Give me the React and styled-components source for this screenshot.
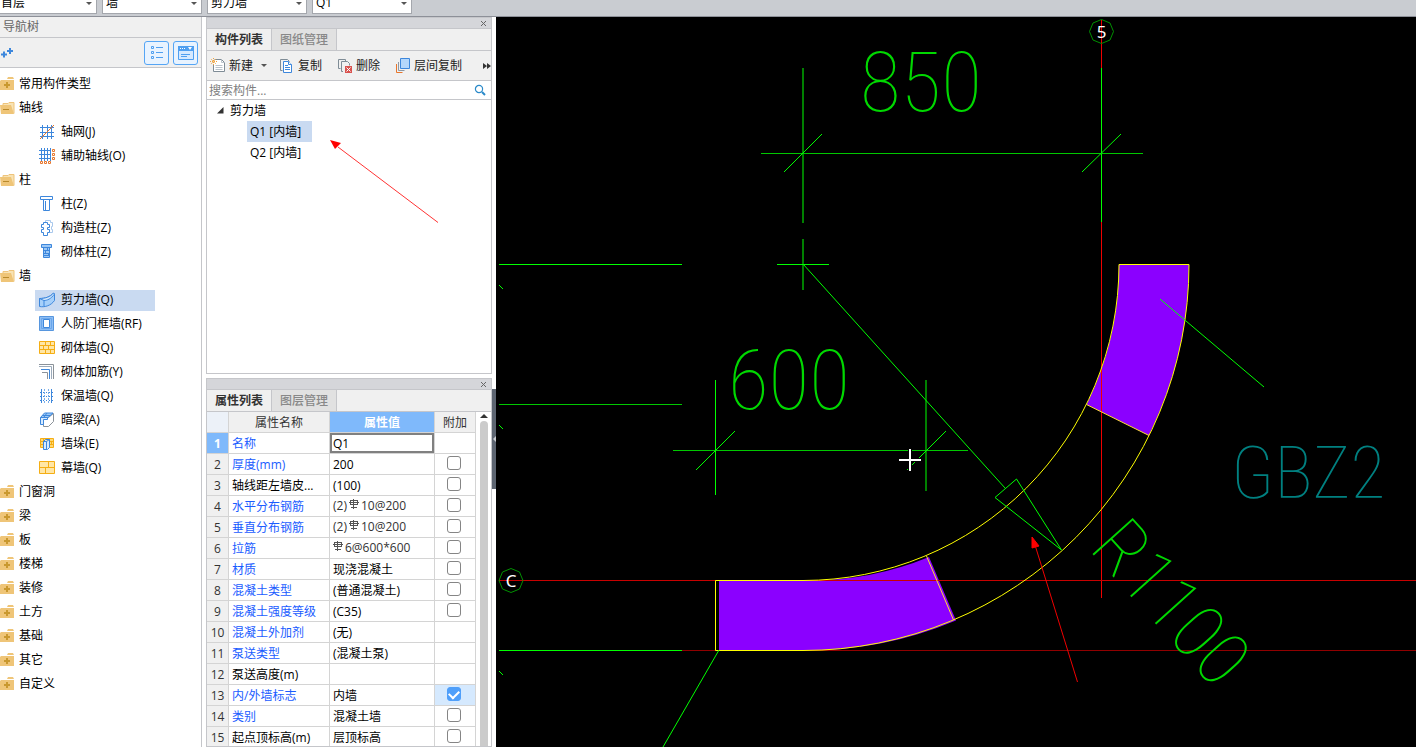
import React from "react";
import styled, { createGlobalStyle } from "styled-components";

const GlobalStyle = createGlobalStyle`
    * {
        box-sizing: border-box;
    }

    body {
        margin: 0;
        overflow: hidden;
        background: #fff;
        color: #000;
        font-family: "Open Sans", "Noto Sans CJK SC", sans-serif;
        font-size: 12px;
        line-height: 20px;
    }

    button, input, select {
        font: inherit;
        color: inherit;
    }

    button {
        padding: 0;
        border: 0;
        background: none;
    }

    svg {
        display: block;
        flex: none;
    }
`;

const BLUE = "#3d87dc";
const GOLD = "#f5ae14";

const combos = [
    { label: "楼层", value: "首层", first: true },
    { label: "构件类别", value: "墙" },
    { label: "构件类型", value: "剪力墙" },
    { label: "构件", value: "Q1" },
];

const navTree = [
    { name: "常用构件类型" },
    { name: "轴线", children: [["grid", "轴网(J)"], ["auxGrid", "辅助轴线(O)"]] },
    { name: "柱", children: [["column", "柱(Z)"], ["tieColumn", "构造柱(Z)"], ["brickColumn", "砌体柱(Z)"]] },
    {
        name: "墙",
        children: [
            ["shearWall", "剪力墙(Q)"],
            ["frameWall", "人防门框墙(RF)"],
            ["brickWall", "砌体墙(Q)"],
            ["rebar", "砌体加筋(Y)"],
            ["insulation", "保温墙(Q)"],
            ["beam", "暗梁(A)"],
            ["pier", "墙垛(E)"],
            ["curtain", "幕墙(Q)"],
        ],
    },
    { name: "门窗洞" },
    { name: "梁" },
    { name: "板" },
    { name: "楼梯" },
    { name: "装修" },
    { name: "土方" },
    { name: "基础" },
    { name: "其它" },
    { name: "自定义" },
];

const properties = [
    { name: "名称", value: "Q1", blue: true, editing: true },
    { name: "厚度(mm)", value: "200", blue: true, extra: true },
    { name: "轴线距左墙皮...", value: "(100)", extra: true },
    { name: "水平分布钢筋", before: "(2)", value: "10@200", steel: true, blue: true, extra: true },
    { name: "垂直分布钢筋", before: "(2)", value: "10@200", steel: true, blue: true, extra: true },
    { name: "拉筋", before: "", value: "6@600*600", steel: true, blue: true, extra: true },
    { name: "材质", value: "现浇混凝土", blue: true, extra: true },
    { name: "混凝土类型", value: "(普通混凝土)", blue: true, extra: true },
    { name: "混凝土强度等级", value: "(C35)", blue: true, extra: true },
    { name: "混凝土外加剂", value: "(无)", blue: true },
    { name: "泵送类型", value: "(混凝土泵)", blue: true },
    { name: "泵送高度(m)", value: "" },
    { name: "内/外墙标志", value: "内墙", blue: true, extra: true, checked: true },
    { name: "类别", value: "混凝土墙", blue: true, extra: true },
    { name: "起点顶标高(m)", value: "层顶标高", extra: true },
];

/* ---------- icons ---------- */

const icons = {
    grid: (
        <g fill="none">
            <path d="M3.500 1v14M8.500 1v14M12.500 1v14M1 3.500h14M1 8.500h14M1 12.500h14" stroke={BLUE} />
            <path d="M1 15L15 1" stroke="#e8762c" />
        </g>
    ),
    auxGrid: (
        <g fill="none">
            <path d="M2.500 0v13M5.500 0v13M8.500 0v13M11.500 0v13M0 2.500h12M0 6.500h12M0 10.500h12" stroke={BLUE} />
            <path d="M1.500 13.500h2v2h-2zM5.500 13.500h2v2h-2zM9.500 13.500h2v2h-2zM13.500 1.500h2v2h-2zM13.500 5.500h2v2h-2zM13.500 9.500h2v2h-2z" stroke="#e8762c" />
        </g>
    ),
    column: (
        <path d="M1.500.5h12v3h-12zM4.500 3.500v11h6v-11M6.500 5v9" fill="#fff" stroke={BLUE} />
    ),
    tieColumn: (
        <g fill="#fff">
            <path d="M6.500 3V.5h5v2h2v4h-1v3h1v3h-3" stroke="#a9c8ec" />
            <path d="M4.500 2.500h4v2h2v3h-2v2h2v3h-2v3h-4v-3h-2v-3h2v-2h-2v-3h2z" stroke={BLUE} />
        </g>
    ),
    brickColumn: (
        <g>
            <path d="M2.500.5h10v3h-10zM4.500 3.500h6v10h-6z" fill="#9cc8f6" stroke={BLUE} />
            <path d="M5 6.500h6M5 9.500h6M5 11.500h6M8.500 4v2M6.500 7v2M9.500 9v2" stroke={BLUE} />
        </g>
    ),
    shearWall: (
        <g stroke={BLUE} strokeLinejoin="round">
            <path d="M.5 6.500C6 6.500 11 5 14.500 1l1 1v6.500C12 13.500 6 15.500.5 14.500z" fill="#a6d0fa" />
            <path d="M.5 6.500C6 6.500 11.500 5 14.500 1l1 1C12 7 8 8.500 5 8.500z" fill="#d7ebff" />
            <path d="M5 8.500v6" fill="none" />
        </g>
    ),
    frameWall: (
        <g>
            <path d="M.5.5h14v14H.5z" fill="#8dbef5" stroke="#5796de" />
            <path d="M2.500 2.500h10v10h-10z" fill="none" stroke="#6ba6ea" />
            <path d="M4.500 3.500h6v8h-6z" fill="#fff" stroke={BLUE} />
        </g>
    ),
    brickWall: (
        <path d="M.5 1.500h15v12H.5zM.5 5.500h15M.5 9.500h15M6.500 1.500v4M11.500 1.500v4M4.500 5.500v4M9.500 5.500v4M6.500 9.500v4M11.500 9.500v4" fill="#ffe6a6" stroke={GOLD} />
    ),
    rebar: (
        <g fill="none">
            <path d="M0 .5h14.500V15M3 8.500h5.500V15" stroke="#8b9299" />
            <path d="M2 5.500h8.500V15" stroke={BLUE} />
            <path d="M0 2.500h12.500V15" stroke="#9cabbb" />
        </g>
    ),
    insulation: (
        <g fill="none" stroke={BLUE}>
            <path d="M2.500 1v14M12.500 1v14" />
            <path d="M5.500 1v14M9.500 1v14" stroke="#7aaeea" strokeDasharray="2 1" />
            <path d="M1 4.500h13M1 8.500h13M1 12.500h13" strokeDasharray="1 2" />
        </g>
    ),
    beam: (
        <g strokeLinejoin="round">
            <path d="M4.500 7.500l5-2 5-4v8l-5 5h-5z" fill="#fff" stroke="#8b9299" />
            <path d="M1.500 5.500l4-4.500h8.500l-5 4.500zM3.500 3.500h8M8 1L5 5" fill="#9cc8f6" stroke={BLUE} />
            <path d="M1.500 5.500h7v2h-4v5h-3z" fill="#d7ebff" stroke={BLUE} />
        </g>
    ),
    pier: (
        <g>
            <path d="M1.500 2.500h13v9h-13zM1.500 5.500h13M1.500 8.500h13M4.500 2.500v3M12.500 5.500v3" fill="#ffd873" stroke={GOLD} />
            <path d="M4.500 5.500l2-2h4v8l-2 2h-4zM7.500 5.500v8M4.500 5.500h3l3-2" fill="#d7ebff" stroke={BLUE} />
        </g>
    ),
    curtain: (
        <path d="M.5 1.500h15v12H.5zM.5 7.500h15M9.500 1.500v6M6.500 7.500v6" fill="#ffe6a6" stroke={GOLD} />
    ),
};

function ItemIcon({ name }) {
    return <svg width="16" height="16" viewBox="0 0 16 16" aria-hidden="true">{icons[name]}</svg>;
}

function FolderIcon({ open }) {
    if (open) {
        return (
            <svg width="15" height="14" viewBox="0 0 15 14" aria-hidden="true">
                <path d="M3 4V2.500h5l1-1h5v11" fill="#f8e3b4" stroke="#eec37a" />
                <path d="M0 4h11l3 9H1z" fill="#efc578" />
                <path d="M3 8.500h6" stroke="#b98a2c" />
            </svg>
        );
    }
    return (
        <svg width="15" height="14" viewBox="0 0 15 14" aria-hidden="true">
            <path d="M8 0h5l1 2H7z" fill="#efc578" />
            <path d="M0 4l1-1h13v10H0z" fill="#efc578" />
            <path d="M4 8h6M7 5v6" stroke="#c9982f" strokeWidth="2" />
        </svg>
    );
}

function RebarGlyph() {
    return (
        <svg width="10" height="10" viewBox="0 0 10 10" role="img" aria-label="HRB400">
            <path d="M1 1.500h8M0 3.500h10M1 5.500h8M2 8.500h6M4.500 0v10M1.500 1v5M8.500 1v5" fill="none" stroke="#555" />
        </svg>
    );
}

/* ---------- panels ---------- */

function NavPanel() {
    return (
        <Nav>
            <NavTitle>导航树</NavTitle>
            <NavTools>
                <AddButton aria-label="添加">
                    <svg width="13" height="12" viewBox="0 0 13 12">
                        <path d="M1 7.500h6M4 4.500v6M7 4h6M10 1v6" stroke={BLUE} strokeWidth="2" />
                    </svg>
                </AddButton>
                <ViewButton aria-label="列表视图">
                    <svg width="14" height="15" viewBox="0 0 14 15" fill="none" stroke="#4f9ff0">
                        <path d="M1.500 1.500h2v2h-2zM1.500 6.500h2v2h-2zM1.500 11.500h2v2h-2zM6 2.500h7M6 7.500h7M6 12.500h7" />
                    </svg>
                </ViewButton>
                <ViewButton aria-label="窗口视图">
                    <svg width="16" height="14" viewBox="0 0 16 14">
                        <path d="M.5.5h15v13H.5z" fill="#d5e9ff" stroke="#4f9ff0" />
                        <path d="M0 0h16v5H0z" fill="#4f9ff0" />
                        <path d="M2 2.500h1M4 2.500h1M6 2.500h1" stroke="#fff" />
                        <path d="M10 1h4l-2 3z" fill="#fff" />
                        <path d="M3 8.500h9M3 10.500h6" stroke="#4f9ff0" />
                    </svg>
                </ViewButton>
            </NavTools>
            <NavList>
                {navTree.map(({ name, children }) => (
                    <li key={name}>
                        <NavGroup>
                            <FolderIcon open={Boolean(children)} />
                            {name}
                        </NavGroup>
                        {children && (
                            <NavChildren>
                                {children.map(([icon, label]) => (
                                    <NavRow key={label}>
                                        <NavItem $active={icon === "shearWall"}>
                                            <ItemIcon name={icon} />
                                            {label}
                                        </NavItem>
                                    </NavRow>
                                ))}
                            </NavChildren>
                        )}
                    </li>
                ))}
            </NavList>
        </Nav>
    );
}

function PanelHead({ active, other }) {
    return (
        <>
            <Strip>
                <CloseButton aria-label="关闭">
                    <svg width="7" height="7" viewBox="0 0 7 7">
                        <path d="M1 1l5 5M6 1L1 6" stroke="#666" />
                    </svg>
                </CloseButton>
            </Strip>
            <Tabs role="tablist">
                <Tab role="tab" aria-selected="true" $active>{active}</Tab>
                <Tab role="tab" aria-selected="false">{other}</Tab>
            </Tabs>
        </>
    );
}

function ComponentPanel() {
    return (
        <Panel>
            <PanelHead active="构件列表" other="图纸管理" />
            <Actions>
                <Action>
                    <svg width="16" height="16" viewBox="0 0 16 16">
                        <path d="M4.500 1.500h7l3 3v9H3.500V6" fill="#fff" stroke="#7f8c96" />
                        <path d="M11.500 1.500v3h3M5.500 7.500h7M5.500 9.500h7M5.500 11.500h7" fill="none" stroke="#b9c2ca" />
                        <path d="M1 1l5 5M6 1L1 6M3.500 0v7M0 3.500h7" stroke="#f0a33c" strokeDasharray="1 1" />
                    </svg>
                    新建
                    <ActionCaret />
                </Action>
                <Action>
                    <svg width="16" height="16" viewBox="0 0 16 16" fill="#fff">
                        <path d="M3.500 12.500h-2v-11h7l2 2" fill="none" stroke="#7f8c96" />
                        <path d="M4.500 3.500h5l3 3v8h-8zM6 7.500h3M6 9.500h5M6 11.500h5" stroke={BLUE} />
                        <path d="M9.500 3.500v3h3" stroke={BLUE} />
                    </svg>
                    复制
                </Action>
                <Action>
                    <svg width="16" height="16" viewBox="0 0 16 16" fill="none">
                        <path d="M3.500 10.500h-2v-9h7v2M6 13.500H4.500v-10h6l2 2v2" stroke="#7f8c96" />
                        <path d="M8 8h7v7H8z" fill="#d9534f" />
                        <path d="M9.500 9.500l4 4M13.500 9.500l-4 4" stroke="#fff" />
                    </svg>
                    删除
                </Action>
                <Action>
                    <svg width="16" height="16" viewBox="0 0 16 16" fill="none">
                        <path d="M1.500 6v8.500h6" stroke="#e8762c" />
                        <path d="M3.500 4v8.500h6" stroke="#8d99a5" />
                        <path d="M5.500.5h9v10h-9z" fill="#b5d7fb" stroke={BLUE} />
                    </svg>
                    层间复制
                </Action>
                <MoreButton aria-label="更多">
                    <svg width="8" height="6" viewBox="0 0 8 6" fill="#333">
                        <path d="M0 0l4 3-4 3zM4 0l4 3-4 3z" />
                    </svg>
                </MoreButton>
            </Actions>
            <SearchBar>
                <SearchInput type="text" aria-label="搜索构件" placeholder="搜索构件..." />
                <button aria-label="搜索">
                    <svg width="12" height="12" viewBox="0 0 12 12" fill="none" stroke="#2a8ac9">
                        <circle cx="5" cy="5" r="3.600" strokeWidth="1.200" />
                        <path d="M8 8l3 3" strokeWidth="2" />
                    </svg>
                </button>
            </SearchBar>
            <PartList>
                <PartGroup>
                    <svg width="7" height="7" viewBox="0 0 7 7">
                        <path d="M6.500 0v6.500H0z" fill="#333" />
                    </svg>
                    剪力墙
                </PartGroup>
                <PartItem $active>Q1 [内墙]</PartItem>
                <PartItem>Q2 [内墙]</PartItem>
            </PartList>
        </Panel>
    );
}

function PropertyPanel() {
    return (
        <Panel>
            <PanelHead active="属性列表" other="图层管理" />
            <TableArea>
                <Table>
                    <colgroup>
                        <col width="22" />
                        <col />
                        <col width="105" />
                        <col width="41" />
                    </colgroup>
                    <thead>
                        <tr>
                            <HeadCell $blank aria-label="序号" />
                            <HeadCell>属性名称</HeadCell>
                            <HeadCell $active>属性值</HeadCell>
                            <HeadCell>附加</HeadCell>
                        </tr>
                    </thead>
                    <tbody>
                        {properties.map((row, i) => (
                            <tr key={row.name}>
                                <IndexCell scope="row" $active={row.editing}>{i + 1}</IndexCell>
                                <NameCell $blue={row.blue}>{row.name}</NameCell>
                                <ValueCell $bare={row.editing || row.steel}>
                                    {row.editing && <ValueInput aria-label={row.name} defaultValue={row.value} />}
                                    {row.steel && <Steel>{row.before}<RebarGlyph />{row.value}</Steel>}
                                    {!row.editing && !row.steel && row.value}
                                </ValueCell>
                                <CheckCell $on={row.checked}>
                                    {row.extra && (
                                        <Check type="checkbox" aria-label={"附加 " + row.name} defaultChecked={row.checked} />
                                    )}
                                </CheckCell>
                            </tr>
                        ))}
                    </tbody>
                </Table>
                <Scroll>
                    <svg width="8" height="4" viewBox="0 0 8 4"><path d="M4 0l4 4H0z" fill="#333" /></svg>
                    <Thumb />
                </Scroll>
            </TableArea>
        </Panel>
    );
}

function AxisMark({ x, y, label }) {
    return (
        <g transform={`translate(${x} ${y})`}>
            <path d="M0-12l8.500 3.500L12 0l-3.500 8.500L0 12l-8.500-3.500L-12 0l3.500-8.500z" fill="none" stroke="#009000" />
            <AxisText y="6">{label}</AxisText>
        </g>
    );
}

function Drawing() {
    return (
        <Canvas viewBox="496 17 920 730" preserveAspectRatio="xMinYMin slice" fill="none" stroke="#00ff00">
            {/* wall end columns */}
            <g fill="#8b00ff" stroke="none">
                <path d="M1119 264H1189A386 386 0 0 1 1149 435.500L1086.500 404.500A316 316 0 0 0 1119 264z" />
                <path d="M719 580.500H803A316 316 0 0 0 929 557L956 620.500A386 386 0 0 1 803 650.500H719z" />
            </g>

            {/* axes */}
            <path d="M1101.500 20V598" stroke="#f00000" />
            <path d="M499 580.500H1416" stroke="#c80000" />
            <path d="M682 650.500H1416" stroke="#900000" />

            {/* wall outline */}
            <g stroke="#ffff00">
                <path d="M1119 264.500A316 316 0 0 1 803 580.500H715.500V650.500H803A386 386 0 0 0 1189 264.500z" />
                <path d="M1086.500 404.500L1149 435.500M926.500 556L953.500 620" stroke="#ffe030" />
            </g>

            {/* dimension lines */}
            <path d="M803 68V223M803 239V290M926 380V491" stroke="#008000" strokeWidth="2" />
            <path d="M1101.500 68V222M715.500 380V495M777 264.500H829M499 264.500H682M499 650.500H682" />
            <path d="M761 153.500H1143M673 450.500H968M499 404.500H682" stroke="#00c800" />
            <path d="M784 172L822 134M1082 172L1121 134M696 470L735 431M907 470L946 431" />
            <path d="M499 285l4 4M499 425l4 4M499 671l4 4" />
            <path d="M803 264L1005 488M995 497.500L1016.500 479L1061.500 550z" />
            <path d="M1160 299L1264 387M719 650L663 747" />

            <DimText x="860" y="111">850</DimText>
            <DimText x="728" y="409">600</DimText>
            <TagText x="1231" y="498">GBZ2</TagText>
            <RadiusText transform="translate(1088 549) rotate(48)">R1100</RadiusText>

            <AxisMark x={1101.5} y={31.5} label="5" />
            <AxisMark x={511} y={580.5} label="C" />

            {/* cursor */}
            <path d="M910 449v22M899 460h22" stroke="#000" strokeWidth="4" />
            <path d="M910 449v22M899 460h22" stroke="#fff" strokeWidth="2" />

            <path d="M1077.500 682L1035 545" stroke="#f00000" />
            <path d="M1032 537l7 9-7 2z" fill="#f00" stroke="#f00" strokeWidth="1" />
        </Canvas>
    );
}

export default function App() {
    return (
        <Page>
            <GlobalStyle />
            <TopBar>
                {combos.map(({ label, value, first }) => (
                    <Combo key={label} $first={first}>
                        <ComboSelect aria-label={label} defaultValue={value} $first={first}>
                            <option>{value}</option>
                        </ComboSelect>
                        <Caret />
                    </Combo>
                ))}
            </TopBar>
            <Workspace>
                <NavPanel />
                <Dock>
                    <ComponentPanel />
                    <PropertyPanel />
                    <Pointer width="110" height="85" viewBox="0 0 110 85" aria-hidden="true">
                        <path d="M108 82.500L8 7" stroke="#f33" />
                        <path d="M0 0l11 3-6 6z" fill="#f00" />
                    </Pointer>
                </Dock>
                <Gutter>
                    <Handle aria-label="折叠面板">
                        <svg width="3" height="6" viewBox="0 0 3 6"><path d="M3 0v6L0 3z" fill="#c9ccd1" /></svg>
                    </Handle>
                </Gutter>
                <Drawing />
            </Workspace>
        </Page>
    );
}

const Page = styled.div`
    display: flex;
    flex-direction: column;
    height: 100vh;
    overflow: hidden;
`;

const TopBar = styled.div`
    flex: none;
    display: flex;
    align-items: flex-end;
    gap: 5px;
    height: 17px;
    padding-bottom: 2px;
    overflow: hidden;
    background: #c9ccd1;
    border-bottom: 1px solid #8d9098;
`;

const Combo = styled.div`
    flex: none;
    display: flex;
    align-items: center;
    width: ${(props) => (props.$first ? "97px" : "100px")};
    height: 22px;
    padding-right: 4px;
    background: #fff;
    border: 1px solid #a4a7ad;
    border-left-width: ${(props) => (props.$first ? "0" : "1px")};
`;

const ComboSelect = styled.select`
    flex: 1;
    min-width: 0;
    height: 20px;
    padding: 0 0 0 ${(props) => (props.$first ? "1px" : "3px")};
    appearance: none;
    border: 0;
    background: none;
`;

const Caret = styled.span`
    border: 3px solid transparent;
    border-top-color: #555;
    border-bottom: 0;
`;

const ActionCaret = styled(Caret)`
    margin: 0 -3px 0 5px;
`;

const Workspace = styled.div`
    flex: 1;
    display: flex;
    min-height: 0;
`;

const Nav = styled.nav`
    flex: none;
    width: 202px;
    overflow: hidden;
    border-right: 1px solid #c5c6ca;
`;

const NavTitle = styled.div`
    height: 21px;
    padding-left: 3px;
    background: #f0f0f0;
    border-bottom: 1px solid #c5c6ca;
    color: #666;
`;

const NavTools = styled.div`
    display: flex;
    align-items: center;
    gap: 4px;
    height: 30px;
    padding-right: 3px;
    background: #f0f0f0;
    border-bottom: 1px solid #c5c6ca;
`;

const AddButton = styled.button`
    margin-right: auto;
`;

const ViewButton = styled.button`
    display: flex;
    align-items: center;
    justify-content: center;
    width: 25px;
    height: 24px;
    background: #e8f3ff;
    border: 1px solid #55a5f5;
    border-radius: 3px;
`;

const NavList = styled.ul`
    margin: 0;
    padding: 4px 0 0;
    list-style: none;
`;

const NavGroup = styled.div`
    display: flex;
    align-items: center;
    gap: 4px;
    height: 24px;
`;

const NavChildren = styled.ul`
    margin: 0;
    padding: 0 0 0 35px;
    list-style: none;
`;

const NavRow = styled.li`
    display: flex;
    align-items: center;
    height: 24px;
`;

const NavItem = styled.span`
    display: flex;
    align-items: center;
    gap: 6px;
    width: 120px;
    height: 21px;
    padding-left: 4px;
    background: ${(props) => (props.$active ? "#c9daf1" : "none")};
`;

const Dock = styled.div`
    position: relative;
    flex: none;
    display: grid;
    grid-template-rows: 357px 1fr;
    gap: 4px;
    width: 286px;
    margin-left: 4px;
`;

const Panel = styled.section`
    display: flex;
    flex-direction: column;
    min-height: 0;
    overflow: hidden;
    border: 1px solid #c5c6ca;
`;

const Strip = styled.div`
    flex: none;
    display: flex;
    align-items: center;
    justify-content: flex-end;
    height: 11px;
    padding-right: 4px;
    background: #d5d6da;
    border-bottom: 1px solid #c5c6ca;
`;

const CloseButton = styled.button`
    display: flex;
`;

const Tabs = styled.div`
    flex: none;
    display: flex;
    height: 22px;
    background: #f0f0f0;
    border-bottom: 1px solid #c5c6ca;
`;

const Tab = styled.button`
    width: 65px;
    border-right: 1px solid #c5c6ca;
    background: ${(props) => (props.$active ? "#f0f0f0" : "#e1e1e1")};
    color: ${(props) => (props.$active ? "#333" : "#888")};
    font-weight: ${(props) => (props.$active ? "700" : "500")};
`;

const Actions = styled.div`
    flex: none;
    display: flex;
    align-items: center;
    gap: 15px;
    height: 30px;
    padding-left: 3px;
    background: #f0f0f0;
    border-bottom: 1px solid #c5c6ca;
`;

const Action = styled.button`
    display: flex;
    align-items: center;
    gap: 3px;
    white-space: nowrap;
    color: #222;
`;

const MoreButton = styled.button`
    margin-left: auto;
`;

const SearchBar = styled.div`
    flex: none;
    display: flex;
    align-items: center;
    height: 19px;
    padding-right: 5px;
    border-bottom: 1px solid #c5c6ca;
`;

const SearchInput = styled.input`
    flex: 1;
    min-width: 0;
    height: 18px;
    padding: 2px 2px 0;
    border: 0;
    outline: 0;
    background: none;

    &::placeholder {
        color: #808080;
    }
`;

const PartList = styled.ul`
    margin: 0;
    padding: 0;
    list-style: none;
`;

const PartGroup = styled.li`
    display: flex;
    align-items: center;
    gap: 6px;
    height: 21px;
    padding-left: 10px;
`;

const PartItem = styled.li`
    display: flex;
    align-items: center;
    width: 65px;
    height: 21px;
    margin-left: 40px;
    padding-left: 3px;
    white-space: nowrap;
    background: ${(props) => (props.$active ? "#c9daf1" : "none")};
`;

const TableArea = styled.div`
    flex: 1;
    display: flex;
    min-height: 0;
    overflow: hidden;
`;

const Table = styled.table`
    flex: none;
    align-self: flex-start;
    width: 269px;
    table-layout: fixed;
    border-collapse: separate;
    border-spacing: 0;
`;

const cell = `
    height: 21px;
    padding: 2px 0 0 3px;
    border: 0 solid #d4d4d4;
    border-width: 0 1px 1px 0;
    line-height: 18px;
    text-align: left;
    font-weight: 400;
    white-space: nowrap;
    overflow: hidden;
`;

const HeadCell = styled.th`
    ${cell}
    padding-left: 0;
    text-align: center;
    background: ${(props) => (props.$active ? "#7fb9fb" : props.$blank ? "#ecf1f8" : "#f0f0f0")};
    color: ${(props) => (props.$active ? "#fff" : "#333")};
    font-weight: ${(props) => (props.$active ? "700" : "400")};
`;

const IndexCell = styled.th`
    ${cell}
    padding-left: 0;
    text-align: center;
    background: ${(props) => (props.$active ? "#7fb9fb" : "#f0f0f0")};
    color: ${(props) => (props.$active ? "#fff" : "#333")};
    font-weight: ${(props) => (props.$active ? "700" : "400")};
`;

const NameCell = styled.td`
    ${cell}
    color: ${(props) => (props.$blue ? "#1a5cff" : "#000")};
`;

const ValueCell = styled.td`
    ${cell}
    ${(props) => props.$bare && "padding: 0;"}
`;

const ValueInput = styled.input`
    display: block;
    width: 100%;
    height: 20px;
    padding: 1px 1px 0;
    border: 2px solid #808080;
    outline: 0;
`;

const Steel = styled.span`
    display: flex;
    align-items: center;
    gap: 2px;
    height: 20px;
    padding-left: 3px;
    color: #333;

    svg {
        margin-bottom: 4px;
    }
`;

const CheckCell = styled.td`
    ${cell}
    padding: 0;
    background: ${(props) => (props.$on ? "#d5e9fe" : "#fff")};
`;

const Check = styled.input`
    display: flex;
    align-items: center;
    justify-content: center;
    width: 14px;
    height: 14px;
    margin: 0 auto 2px 12px;
    appearance: none;
    background: #fff;
    border: 1px solid #858585;
    border-radius: 3px;

    &:checked {
        background: #4f9ffa;
        border-color: #4f9ffa;
    }

    &:checked::before {
        content: "";
        width: 8px;
        height: 5px;
        margin-bottom: 2px;
        border: 2px solid #fff;
        border-width: 0 0 2px 2px;
        transform: rotate(-45deg);
    }
`;

const Scroll = styled.div`
    flex: 1;
    display: flex;
    flex-direction: column;
    align-items: center;
    gap: 3px;
    padding-top: 2px;
`;

const Thumb = styled.div`
    flex: 1;
    width: 8px;
    background: #cbcbcb;
    border-radius: 4px 4px 0 0;
`;

const Pointer = styled.svg`
    position: absolute;
    left: 124px;
    top: 123px;
    pointer-events: none;
`;

const Gutter = styled.div`
    flex: none;
    width: 4px;
    padding-top: 372px;
`;

const Handle = styled.button`
    display: flex;
    align-items: center;
    justify-content: center;
    width: 4px;
    height: 100px;
    background: #5d6571;
`;

const Canvas = styled.svg`
    flex: 1;
    min-width: 0;
    height: 100%;
    background: #000;
`;

const DimText = styled.text`
    fill: #00d800;
    stroke: none;
    font-family: "Noto Sans ExtraCondensed Thin", "Noto Sans ExtraCondensed", "Roboto Condensed", Roboto, sans-serif;
    font-size: 84px;
    font-weight: 100;
`;

const TagText = styled(DimText)`
    fill: #008080;
    font-size: 72px;
`;

const RadiusText = styled(DimText)`
    font-size: 76px;
`;

const AxisText = styled.text`
    fill: #fff;
    stroke: none;
    font-family: "Noto Sans", sans-serif;
    font-size: 17px;
    text-anchor: middle;
`;
